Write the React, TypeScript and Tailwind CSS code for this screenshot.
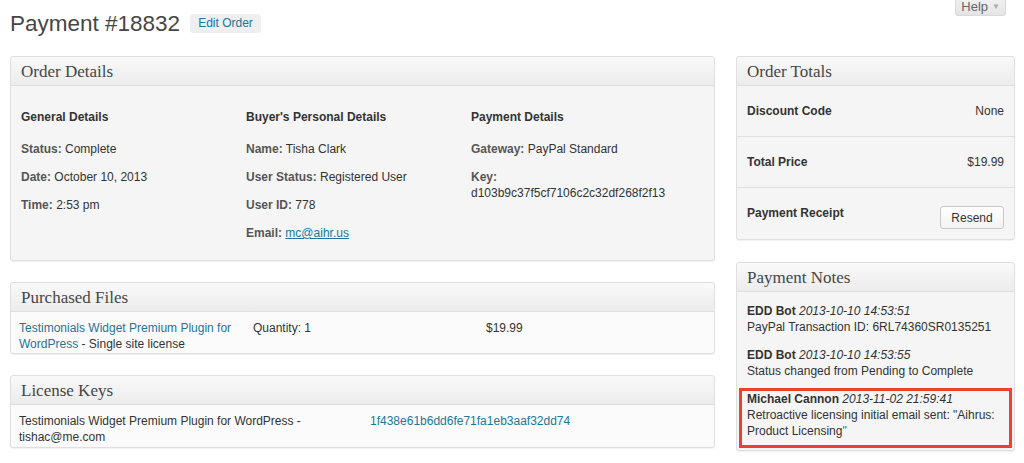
const sans = "font-['Liberation_Sans',Arial,sans-serif]";

const Panel = ({title, children, className = ""}: {title: string; children: React.ReactNode; className?: string}) => (
    <div className={`border border-[#dfdfdf] rounded-[3px] bg-[#f5f5f5] shadow-[0_1px_1px_rgba(0,0,0,0.06)] ${className}`}>
        <div className="h-[29px] flex items-center px-[10px] border-b border-[#dfdfdf] rounded-t-[3px] bg-gradient-to-b from-[#f9f9f9] to-[#ececec]">
            <h3 className="font-['Liberation_Serif',Georgia,serif] text-[17px] leading-none text-[#464646]">{title}</h3>
        </div>
        {children}
    </div>
);

const Field = ({label, first = false, children}: {label: string; first?: boolean; children: React.ReactNode}) => (
    <p className={`${first ? "mt-[16px]" : "mt-[12px]"} leading-4`}>
        <strong className="text-[#555]">{label}</strong> {children}
    </p>
);

const App = () => {
    return (
        <div className={`w-[1024px] h-[463px] bg-white text-[12px] text-[#333] pl-[10px] pr-[9px] ${sans}`}>
            {/* top bar */}
            <div className="flex items-start justify-between h-[56px]">
                <div className="flex items-center gap-[10px] pt-[9px]">
                    <h1 className="text-[22.5px] leading-[29px] text-[#464646]">Payment #18832</h1>
                    <button className="h-[19px] px-[8px] rounded-[3px] bg-[#efefef] text-[#21759b] text-[12px] leading-[19px]">
                        Edit Order
                    </button>
                </div>
                <button className="mr-[9px] -mt-[4px] h-[20px] pt-[3px] px-[5px] flex items-center gap-[4px] border border-t-0 border-[#dadada] rounded-b-[3px] bg-gradient-to-b from-[#f3f3f3] to-[#e4e4e4] text-[13px] text-[#666]">
                    Help <span className="text-[8px] text-[#aaa]">▼</span>
                </button>
            </div>

            <div className="flex gap-[21px]">
                {/* left column */}
                <div className="w-[705px] shrink-0 flex flex-col gap-[21px]">
                    <Panel title="Order Details">
                        <div className="grid grid-cols-[225px_225px_1fr] px-[10px] pt-[23px] pb-[19px]">
                            <div>
                                <h4 className="font-bold leading-4">General Details</h4>
                                <Field first label="Status:">Complete</Field>
                                <Field label="Date:">October 10, 2013</Field>
                                <Field label="Time:">2:53 pm</Field>
                            </div>
                            <div>
                                <h4 className="font-bold leading-4">Buyer's Personal Details</h4>
                                <Field first label="Name:">Tisha Clark</Field>
                                <Field label="User Status:">Registered User</Field>
                                <Field label="User ID:">778</Field>
                                <Field label="Email:">
                                    <a className="text-[#21759b] underline">mc@aihr.us</a>
                                </Field>
                            </div>
                            <div>
                                <h4 className="font-bold leading-4">Payment Details</h4>
                                <Field first label="Gateway:">PayPal Standard</Field>
                                <p className="mt-[12px] leading-4">
                                    <strong className="text-[#555]">Key:</strong>
                                    <br />
                                    d103b9c37f5cf7106c2c32df268f2f13
                                </p>
                            </div>
                        </div>
                    </Panel>

                    <Panel title="Purchased Files">
                        <div className="grid grid-cols-[234px_233px_1fr] bg-[#fbfbfb] px-[8px] pt-[8px] pb-[1px] leading-4 rounded-b-[3px]">
                            <div>
                                <a className="text-[#21759b]">Testimonials Widget Premium Plugin for<br />WordPress</a> - Single site license
                            </div>
                            <div>Quantity: 1</div>
                            <div>$19.99</div>
                        </div>
                    </Panel>

                    <Panel title="License Keys">
                        <div className="grid grid-cols-[351px_1fr] bg-[#fbfbfb] px-[8px] pt-[8px] pb-[2px] leading-4 rounded-b-[3px]">
                            <div>
                                Testimonials Widget Premium Plugin for WordPress -<br />tishac@me.com
                            </div>
                            <div>
                                <a className="text-[#21759b]">1f438e61b6dd6fe71fa1eb3aaf32dd74</a>
                            </div>
                        </div>
                    </Panel>
                </div>

                {/* right column */}
                <div className="w-[279px] shrink-0 flex flex-col gap-[22px]">
                    <Panel title="Order Totals">
                        <div className="flex items-center justify-between px-[10px] h-[51px] border-b border-[#dfdfdf] leading-4">
                            <strong>Discount Code</strong>
                            <span>None</span>
                        </div>
                        <div className="flex items-center justify-between px-[10px] h-[51px] border-b border-[#dfdfdf] leading-4">
                            <strong>Total Price</strong>
                            <span>$19.99</span>
                        </div>
                        <div className="flex items-start justify-between px-[10px] pt-[17px] h-[51px] leading-4">
                            <strong>Payment Receipt</strong>
                            <button className="h-[23px] w-[64px] mt-[1px] border border-[#c8c8c8] rounded-[3px] bg-gradient-to-b from-white to-[#f2f2f2] text-[12px] text-[#333]">
                                Resend
                            </button>
                        </div>
                    </Panel>

                    <Panel title="Payment Notes">
                        <div className="px-[2px] pt-[11px] pb-[2px] leading-4 whitespace-nowrap">
                            <div className="px-[8px]">
                                <strong>EDD Bot</strong> <em>2013-10-10 14:53:51</em>
                                <br />
                                PayPal Transaction ID: 6RL74360SR0135251
                            </div>
                            <div className="px-[8px] mt-[12px]">
                                <strong>EDD Bot</strong> <em>2013-10-10 14:53:55</em>
                                <br />
                                Status changed from Pending to Complete
                            </div>
                            <div className="mt-[9px] border-[3px] border-[#e8432f] px-[5px] pt-0 pb-[6px]">
                                <strong>Michael Cannon</strong> <em>2013-11-02 21:59:41</em>
                                <br />
                                Retroactive licensing initial email sent: "Aihrus:
                                <br />
                                Product Licensing<span className="text-[#21759b]">"</span>
                            </div>
                        </div>
                    </Panel>
                </div>
            </div>
        </div>
    );
};

export default App;
